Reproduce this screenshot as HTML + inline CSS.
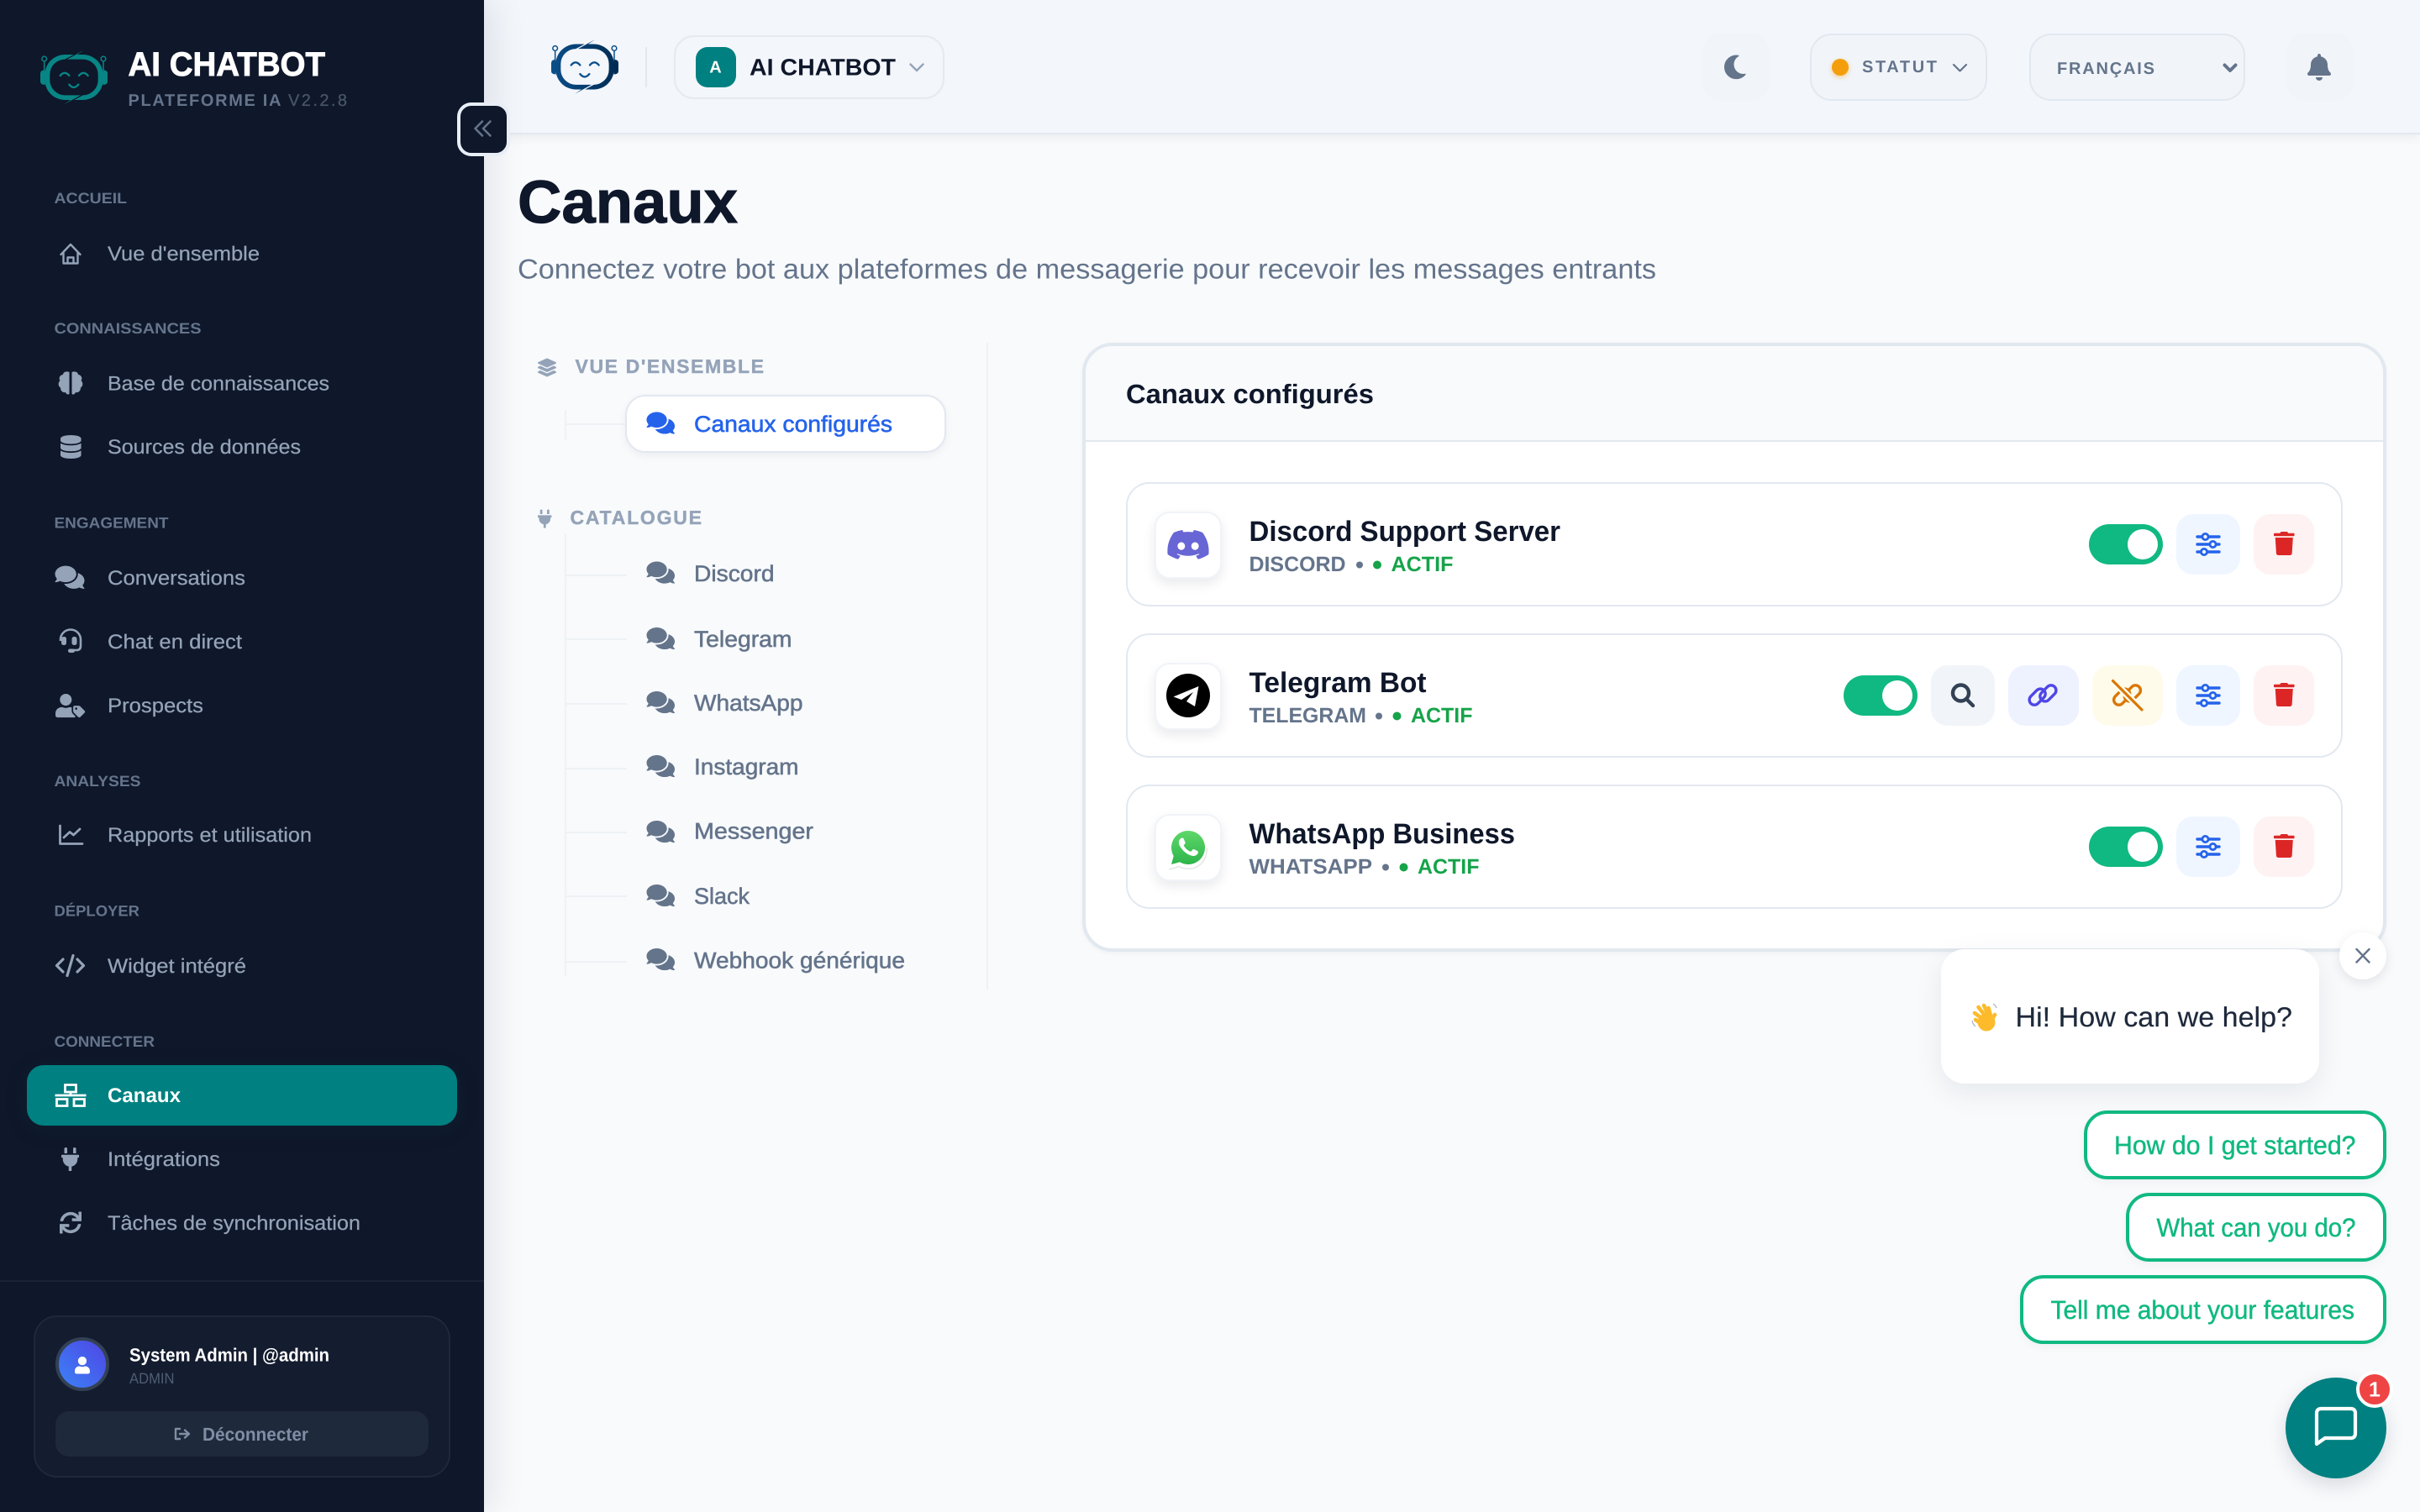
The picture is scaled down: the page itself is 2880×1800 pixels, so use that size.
<!DOCTYPE html>
<html lang="fr">
<head>
<meta charset="utf-8">
<title>Canaux</title>
<style>
html,body{margin:0;padding:0;width:2880px;height:1800px;overflow:hidden;background:#f8fafc}
.b{position:absolute;box-sizing:border-box}
svg.l{position:absolute;left:0;top:0;width:2880px;height:1800px;z-index:20;pointer-events:none}
svg text{font-family:"Liberation Sans",sans-serif;text-rendering:geometricPrecision;white-space:pre}
.sec{font-size:18px;font-weight:700;fill:#64748b}
.nav{font-size:24px;fill:#94a3b8;stroke:#94a3b8;stroke-width:.25}
.tree{font-size:27px;fill:#64748b;stroke:#64748b;stroke-width:.55}
.th{font-size:23px;font-weight:700;fill:#94a3b8}
.nm{font-size:34px;font-weight:700;fill:#0f172a}
.tp{font-size:25px;font-weight:700;fill:#64748b}
.ac{font-size:25px;font-weight:700;fill:#16a34a}
.sg{font-size:31px;fill:#10b981;stroke:#10b981;stroke-width:.45}
.row{left:1340px;width:1448px;height:148px;border:2px solid #e2e8f0;border-radius:28px;background:#fff}
.lg{left:1374px;width:80px;height:80px;border:2px solid #f0f3f8;border-radius:18px;background:#fff;box-shadow:0 6px 14px rgba(15,23,42,.09)}
.tg{width:88px;height:48px;border-radius:24px;background:#10b981}
.tg i{position:absolute;right:6px;top:6px;width:36px;height:36px;border-radius:50%;background:#fff}
.ib{height:72px;border-radius:20px}
.sq{left:2590px;width:76px;background:#eff6ff}
.dl{left:2682px;width:72px;background:#fef2f2}
.sb{border:4px solid #10b981;border-radius:28px;background:#fff;left:auto;right:40px;height:82px;z-index:10;box-shadow:0 4px 12px rgba(15,23,42,.04)}
</style>
</head>
<body>
<!-- top bar -->
<div class="b" style="left:576px;top:0;width:2304px;height:160px;background:#f3f6fb;border-bottom:2px solid #e2e8f0;box-shadow:0 4px 12px rgba(15,23,42,.06)"></div>
<div class="b" style="left:768px;top:56px;width:2px;height:48px;background:#e2e8f0"></div>
<div class="b" style="left:802px;top:42px;width:322px;height:76px;border:2px solid #e5eaf1;border-radius:24px"></div>
<div class="b" style="left:828px;top:56px;width:48px;height:48px;border-radius:14px;background:#008080"></div>
<div class="b" style="left:2026px;top:40px;width:80px;height:80px;border-radius:22px;background:#f1f5f9"></div>
<div class="b" style="left:2154px;top:40px;width:211px;height:80px;border:2px solid #e2e8f0;border-radius:26px;background:#f1f5f9"></div>
<div class="b" style="left:2415px;top:40px;width:257px;height:80px;border:2px solid #e2e8f0;border-radius:26px;background:#f1f5f9"></div>
<div class="b" style="left:2721px;top:40px;width:80px;height:80px;border-radius:22px;background:#f1f5f9"></div>
<div class="b" style="left:2180px;top:70px;width:20px;height:20px;border-radius:50%;background:#f59e0b;box-shadow:0 2px 6px rgba(245,158,11,.45)"></div>

<!-- sidebar -->
<div class="b" style="left:0;top:0;width:576px;height:1800px;background:#0f172a;box-shadow:8px 0 40px rgba(15,23,42,.1);z-index:5"></div>
<div class="b" style="left:32px;top:1268px;width:512px;height:72px;border-radius:20px;background:#008080;box-shadow:0 4px 32px rgba(0,128,128,.08);z-index:6"></div>
<div class="b" style="left:0;top:1524px;width:576px;height:2px;background:#1a2437;z-index:6"></div>
<div class="b" style="left:40px;top:1566px;width:496px;height:193px;border:2px solid #1e293b;border-radius:28px;background:#141c2f;z-index:6"></div>
<div class="b" style="left:66px;top:1592px;width:64px;height:64px;border:4px solid #334155;border-radius:50%;background:linear-gradient(45deg,#3b82f6,#4f46e5);z-index:6"></div>
<div class="b" style="left:66px;top:1680px;width:444px;height:54px;border-radius:16px;background:#1e293b;z-index:6"></div>
<div class="b" style="left:544px;top:122px;width:63px;height:64px;border:4px solid #e8eef6;border-radius:17px;background:#0f172a;z-index:7"></div>

<!-- section nav -->
<div class="b" style="left:1174px;top:408px;width:2px;height:770px;background:#eef2f6"></div>
<div class="b" style="left:672px;top:488px;width:2px;height:35px;background:#eef2f6"></div>
<div class="b" style="left:673px;top:504px;width:72px;height:2px;background:#eef2f6"></div>
<div class="b" style="left:744px;top:470px;width:382px;height:69px;border:2px solid #e2e8f0;border-radius:24px;background:#fff;box-shadow:0 4px 10px rgba(15,23,42,.05)"></div>
<div class="b" style="left:672px;top:636px;width:2px;height:526px;background:#eef2f6"></div>
<div class="b" style="left:673px;top:684px;width:73px;height:2px;background:#eef2f6"></div>
<div class="b" style="left:673px;top:760px;width:73px;height:2px;background:#eef2f6"></div>
<div class="b" style="left:673px;top:837px;width:73px;height:2px;background:#eef2f6"></div>
<div class="b" style="left:673px;top:914px;width:73px;height:2px;background:#eef2f6"></div>
<div class="b" style="left:673px;top:990px;width:73px;height:2px;background:#eef2f6"></div>
<div class="b" style="left:673px;top:1066px;width:73px;height:2px;background:#eef2f6"></div>
<div class="b" style="left:673px;top:1144px;width:73px;height:2px;background:#eef2f6"></div>

<!-- card -->
<div class="b" style="left:1288px;top:408px;width:1552px;height:725px;border:4px solid #e2e8f0;border-radius:36px;background:#fff;overflow:hidden;box-shadow:0 2px 6px rgba(15,23,42,.04)">
  <div class="b" style="left:0;top:0;width:100%;height:114px;background:#f8fafc;border-bottom:2px solid #e2e8f0"></div>
</div>
<div class="b row" style="top:574px"></div>
<div class="b row" style="top:754px"></div>
<div class="b row" style="top:934px"></div>
<div class="b lg" style="top:609px"></div>
<div class="b lg" style="top:789px"></div>
<div class="b lg" style="top:969px"></div>
<div class="b" style="left:1388px;top:802px;width:52px;height:52px;border-radius:50%;background:#000"></div>

<div class="b tg" style="left:2486px;top:624px"><i></i></div>
<div class="b ib sq" style="top:612px"></div>
<div class="b ib dl" style="top:612px"></div>
<div class="b tg" style="left:2194px;top:804px"><i></i></div>
<div class="b ib" style="left:2298px;top:792px;width:76px;background:#f1f5f9"></div>
<div class="b ib" style="left:2390px;top:792px;width:84px;background:#eef2ff"></div>
<div class="b ib" style="left:2490px;top:792px;width:84px;background:#fffbeb"></div>
<div class="b ib sq" style="top:792px"></div>
<div class="b ib dl" style="top:792px"></div>
<div class="b tg" style="left:2486px;top:984px"><i></i></div>
<div class="b ib sq" style="top:972px"></div>
<div class="b ib dl" style="top:972px"></div>

<!-- chat widget -->
<div class="b" style="left:2310px;top:1130px;width:450px;height:160px;border-radius:28px;background:#fff;box-shadow:0 10px 34px rgba(15,23,42,.08);z-index:10"></div>
<div class="b" style="left:2784px;top:1110px;width:56px;height:56px;border-radius:50%;background:#fff;box-shadow:0 4px 14px rgba(15,23,42,.1);z-index:10"></div>
<div class="b sb" style="top:1322px;width:360px"></div>
<div class="b sb" style="top:1420px;width:310px"></div>
<div class="b sb" style="top:1518px;width:436px"></div>
<div class="b" style="left:2720px;top:1640px;width:120px;height:120px;border-radius:50%;background:#008080;box-shadow:0 8px 24px rgba(15,23,42,.14);z-index:10"></div>
<div class="b" style="left:2804px;top:1632px;width:44px;height:44px;border:4px solid #fff;border-radius:50%;background:#ef4444;z-index:11"></div>

<svg class="l" viewBox="0 0 2880 1800" xmlns="http://www.w3.org/2000/svg">
<defs>
<linearGradient id="navy" gradientUnits="userSpaceOnUse" x1="84" y1="0" x2="324" y2="0"><stop offset="0" stop-color="#0b4f8a"/><stop offset="1" stop-color="#002b52"/></linearGradient>
<linearGradient id="wa" x1="0" y1="0" x2="0" y2="1"><stop offset="0" stop-color="#5fd76a"/><stop offset="1" stop-color="#2db54a"/></linearGradient>
<g id="logo">
<path d="M203 105L172 105A72 72 0 0 0 100 177L100 195A72 72 0 0 0 172 267L192 267L168 283L228 250L172 250A54 54 0 0 1 118 196L118 176A54 54 0 0 1 172 122Z"/>
<path d="M205 267L236 267A72 72 0 0 0 308 195L308 177A72 72 0 0 0 236 105L216 105L240 89L180 122L236 122A54 54 0 0 1 290 176L290 196A54 54 0 0 1 236 250Z"/>
<path d="M84 172Q84 160 101 160L101 213Q84 213 84 201Z"/><path d="M324 172Q324 160 307 160L307 213Q324 213 324 201Z"/>
<path d="M155 180Q171 161 187 180M222 180Q238 161 254 180M187 212Q203 232 220 212" fill="none" stroke-width="7" stroke="currentColor" stroke-linecap="round"/>
<path d="M98 129V162M309 129V162" fill="none" stroke-width="4.5" stroke="currentColor"/>
<circle cx="98" cy="120" r="8.5" fill="none" stroke-width="4.5" stroke="currentColor"/><circle cx="309" cy="120" r="8.5" fill="none" stroke-width="4.5" stroke="currentColor"/>
</g>
<path id="cm" d="M416 192c0-88.4-93.1-160-208-160S0 103.6 0 192c0 34.3 14.1 65.9 38 92-13.4 30.2-35.5 54.2-35.8 54.5-2.2 2.3-2.8 5.7-1.5 8.7S4.8 352 8 352c36.6 0 66.9-12.3 88.7-25 32.2 15.7 70.3 25 111.3 25 114.9 0 208-71.6 208-160zm122 220c23.9-26 38-57.7 38-92 0-66.9-53.5-124.2-129.3-148.1.9 6.6 1.3 13.3 1.3 20.1 0 105.9-107.7 192-240 192-10.8 0-21.3-.8-31.7-1.9C207.8 439.6 281.8 480 368 480c41 0 79.1-9.2 111.3-25 21.8 12.7 52.1 25 88.7 25 3.2 0 6.1-1.9 7.3-4.8 1.3-2.9.7-6.3-1.5-8.7-.3-.3-22.4-24.2-35.8-54.5z"/>
<path id="plug" d="M320,32a32,32,0,0,0-64,0v96h64Zm48,128H16A16,16,0,0,0,0,176v32a16,16,0,0,0,16,16H32v32A160.07,160.07,0,0,0,160,412.8V512h64V412.8A160.07,160.07,0,0,0,352,256V224h16a16,16,0,0,0,16-16V176A16,16,0,0,0,368,160ZM128,32a32,32,0,0,0-64,0v96h64Z"/>
<path id="trash" d="M432 32H312l-9.4-18.7A24 24 0 0 0 281.1 0H166.8a23.72 23.72 0 0 0-21.4 13.3L136 32H16A16 16 0 0 0 0 48v32a16 16 0 0 0 16 16h416a16 16 0 0 0 16-16V48a16 16 0 0 0-16-16zM53.2 467a48 48 0 0 0 47.9 45h245.8a48 48 0 0 0 47.9-45L416 128H32z"/>
<g id="sl" fill="none" stroke="#2563eb" stroke-width="3.4" stroke-linecap="round">
<path d="M-13 -9H13M-13 0H13M-13 9H13"/>
<circle cx="-3.5" cy="-9" r="3.6" fill="#eff6ff" stroke-width="2.8"/><circle cx="5.5" cy="0" r="3.6" fill="#eff6ff" stroke-width="2.8"/><circle cx="-5" cy="9" r="3.6" fill="#eff6ff" stroke-width="2.8"/>
</g>
</defs>

<!-- sidebar brand -->
<g transform="translate(48 60) scale(.3333)" fill="#088585" color="#088585"><use href="#logo" transform="translate(-84 -90)"/></g>
<text x="152.5" y="90" font-size="40" font-weight="700" fill="#fff" stroke="#fff" stroke-width=".9" textLength="234.5" lengthAdjust="spacingAndGlyphs">AI CHATBOT</text>
<text x="152.5" y="126" font-size="20" font-weight="700" fill="#64748b" textLength="182" lengthAdjust="spacing">PLATEFORME IA</text>
<text x="343" y="126" font-size="20" fill="#475569" stroke="#475569" stroke-width=".3" textLength="70" lengthAdjust="spacing">V2.2.8</text>
<path d="M574 144.5L565.5 153L574 161.5M583.5 144.5L575 153L583.5 161.5" fill="none" stroke="#64748b" stroke-width="2.6" stroke-linecap="round" stroke-linejoin="round"/>

<!-- sidebar labels -->
<g>
<text class="sec" x="64.5" y="242" textLength="86.5" lengthAdjust="spacingAndGlyphs">ACCUEIL</text>
<text class="sec" x="64.5" y="397" textLength="175" lengthAdjust="spacingAndGlyphs">CONNAISSANCES</text>
<text class="sec" x="64.5" y="628.5" textLength="136" lengthAdjust="spacingAndGlyphs">ENGAGEMENT</text>
<text class="sec" x="64.5" y="936" textLength="103" lengthAdjust="spacingAndGlyphs">ANALYSES</text>
<text class="sec" x="64.5" y="1090.5" textLength="101.5" lengthAdjust="spacingAndGlyphs">DÉPLOYER</text>
<text class="sec" x="64.5" y="1246" textLength="119.5" lengthAdjust="spacingAndGlyphs">CONNECTER</text>

<text class="nav" x="128" y="310" textLength="181" lengthAdjust="spacingAndGlyphs">Vue d'ensemble</text>
<text class="nav" x="128" y="464.5" textLength="264" lengthAdjust="spacingAndGlyphs">Base de connaissances</text>
<text class="nav" x="128" y="540" textLength="230" lengthAdjust="spacingAndGlyphs">Sources de données</text>
<text class="nav" x="128" y="696" textLength="164" lengthAdjust="spacingAndGlyphs">Conversations</text>
<text class="nav" x="128" y="772" textLength="160" lengthAdjust="spacingAndGlyphs">Chat en direct</text>
<text class="nav" x="128" y="848" textLength="114" lengthAdjust="spacingAndGlyphs">Prospects</text>
<text class="nav" x="128" y="1002" textLength="243" lengthAdjust="spacingAndGlyphs">Rapports et utilisation</text>
<text class="nav" x="128" y="1158" textLength="165" lengthAdjust="spacingAndGlyphs">Widget intégré</text>
<text x="128" y="1312" font-size="24" font-weight="700" fill="#fff" textLength="87" lengthAdjust="spacingAndGlyphs">Canaux</text>
<text class="nav" x="128" y="1388" textLength="134" lengthAdjust="spacingAndGlyphs">Intégrations</text>
<text class="nav" x="128" y="1464" textLength="301" lengthAdjust="spacingAndGlyphs">Tâches de synchronisation</text>
<text x="154" y="1620.5" font-size="22" font-weight="700" fill="#fff" textLength="238" lengthAdjust="spacingAndGlyphs">System Admin | @admin</text>
<text x="154" y="1647" font-size="18" fill="#4f5d73" textLength="53.5" lengthAdjust="spacingAndGlyphs">ADMIN</text>
<text x="241" y="1715" font-size="22" font-weight="700" fill="#7f8ea4" textLength="126" lengthAdjust="spacingAndGlyphs">Déconnecter</text>
</g>

<!-- sidebar icons -->
<g fill="#94a3b8">
<path d="M72.5 303L84 291L95.5 303M75.5 300V313.5H92.5V300M80.5 313.5V306.5H87.5V313.5" fill="none" stroke="#94a3b8" stroke-width="2.4" stroke-linejoin="round" stroke-linecap="round"/>
<path d="M82.5 443C79 441.5 75 443 75 446C71 446 69.5 451 71.5 453C68.5 456 69.5 460 72 461.5C72 465.5 75 468 78 467C79 470 82.5 470.5 82.5 468Z"/>
<path d="M85.5 443C89 441.5 93 443 93 446C97 446 98.5 451 96.5 453C99.5 456 98.5 460 96 461.5C96 465.5 93 468 90 467C89 470 85.5 470.5 85.5 468Z"/>
<path transform="translate(72 518) scale(.0548)" d="M448 73.143v45.714C448 159.143 347.667 192 224 192S0 159.143 0 118.857V73.143C0 32.857 100.333 0 224 0s224 32.857 224 73.143zM448 176v102.857C448 319.143 347.667 352 224 352S0 319.143 0 278.857V176c48.125 33.143 136.208 48.572 224 48.572S399.874 209.143 448 176zm0 160v102.857C448 479.143 347.667 512 224 512S0 479.143 0 438.857V336c48.125 33.143 136.208 48.572 224 48.572S399.874 369.143 448 336z"/>
<use href="#cm" transform="translate(65.5 671.7) scale(.0608)"/>
<path d="M72 763V761.5A12 12 0 0 1 96 761.5V769Q96 774 91 774H84" fill="none" stroke="#94a3b8" stroke-width="2.6"/>
<rect x="73" y="758" width="6" height="10" rx="2.5"/><rect x="81" y="772.5" width="8" height="4.5" rx="2.2"/><rect x="85.5" y="758" width="6" height="10" rx="2.5"/>
<path transform="translate(66 826) scale(.055)" d="M630.6 364.9l-90.3-90.2c-12-12-28.3-18.7-45.3-18.7h-79.3c-17.7 0-32 14.3-32 32v79.2c0 17 6.7 33.2 18.7 45.2l90.3 90.2c12.5 12.5 32.8 12.5 45.3 0l92.5-92.5c12.6-12.5 12.6-32.7.1-45.2zm-182.8-21c-13.3 0-24-10.7-24-24s10.7-24 24-24 24 10.7 24 24c0 13.2-10.7 24-24 24zm-223.8-88c70.7 0 128-57.3 128-128C352 57.3 294.7 0 224 0S96 57.3 96 128c0 70.6 57.3 128 128 128zm127.8 111.2V294c-12.2-3.6-24.9-6.2-38.2-6.2h-16.7c-22.2 10.2-46.9 16-72.9 16s-50.6-5.8-72.9-16h-16.7C60.2 287.9 0 348.1 0 422.3v41.6c0 26.5 21.5 48 48 48h352c15.5 0 29.1-7.5 37.9-18.9l-58-58c-18.1-18.1-28.1-42.2-28.1-67.9z"/>
<path d="M71.5 983V1004.5H98M76 997L83 990.5L87.5 994L95 987" fill="none" stroke="#94a3b8" stroke-width="2.8" stroke-linecap="round" stroke-linejoin="round"/>
<path d="M75 1142L67.5 1149.5L75 1157M92 1142L99.5 1149.5L92 1157M87 1137.5L80 1161.5" fill="none" stroke="#94a3b8" stroke-width="3.2" stroke-linecap="round" stroke-linejoin="round"/>
<use href="#plug" transform="translate(73 1366) scale(.0548)"/>
<path transform="translate(71 1442.5) scale(.0508)" d="M440.65 12.57l4 82.77A247.16 247.16 0 0 0 255.83 8C134.73 8 33.91 94.92 12.29 209.82A12 12 0 0 0 24.09 224h49.05a12 12 0 0 0 11.67-9.26 175.91 175.91 0 0 1 317-56.94l-101.46-4.86a12 12 0 0 0-12.57 12v47.41a12 12 0 0 0 12 12H500a12 12 0 0 0 12-12V12a12 12 0 0 0-12-12h-47.37a12 12 0 0 0-11.98 12.57zM255.83 432a175.61 175.61 0 0 1-146-77.8l101.8 4.87a12 12 0 0 0 12.57-12v-47.4a12 12 0 0 0-12-12H12a12 12 0 0 0-12 12V500a12 12 0 0 0 12 12h47.35a12 12 0 0 0 12-12.6l-4.15-82.57A247.17 247.17 0 0 0 255.83 504c121.11 0 221.93-86.92 243.55-201.82a12 12 0 0 0-11.8-14.18h-49.05a12 12 0 0 0-11.67 9.26A175.86 175.86 0 0 1 255.83 432z"/>
<path d="M77.5 1291.5H90.5V1300H77.5ZM67.5 1308.5H80V1316.5H67.5ZM88 1308.5H100.5V1316.5H88ZM65.5 1304H102.5M84 1300V1304" fill="none" stroke="#fff" stroke-width="2.8"/>
<path d="M209 1701H214M209 1701V1713H214M214 1707H225M220 1702.5L225 1707L220 1711.5" fill="none" stroke="#7f8ea4" stroke-width="2.4" stroke-linecap="round" stroke-linejoin="round"/>
<path transform="translate(89 1615) scale(.04)" fill="#fff" d="M224 256c70.7 0 128-57.3 128-128S294.7 0 224 0 96 57.3 96 128s57.3 128 128 128zm89.6 32h-16.7c-22.2 10.2-46.9 16-72.9 16s-50.6-5.8-72.9-16h-16.7C60.2 288 0 348.2 0 422.4V464c0 26.5 21.5 48 48 48h352c26.5 0 48-21.5 48-48v-41.6c0-74.2-60.2-134.4-134.4-134.4z"/>
</g>

<!-- top bar content -->
<g transform="translate(628 17.5) scale(.3333)" fill="url(#navy)" color="#0b4f8a"><use href="#logo"/></g>
<text x="851.5" y="86.5" text-anchor="middle" font-size="20" font-weight="700" fill="#fff">A</text>
<text x="892" y="89.5" font-size="28" font-weight="700" fill="#0f172a" textLength="174" lengthAdjust="spacingAndGlyphs">AI CHATBOT</text>
<path d="M1083.5 76.5L1091 84L1098.5 76.5" fill="none" stroke="#94a3b8" stroke-width="2.4" stroke-linecap="round" stroke-linejoin="round"/>
<path transform="translate(2050.5 65.5) scale(.056)" fill="#64748b" d="M283.211 512c78.962 0 151.079-35.925 198.857-94.792 7.068-8.708-.639-21.43-11.562-19.35-124.203 23.654-238.262-71.576-238.262-196.954 0-72.222 38.662-138.635 101.498-174.394 9.686-5.512 7.25-20.197-3.756-22.23A258.156 258.156 0 0 0 283.211 0c-141.309 0-256 114.511-256 256 0 141.309 114.511 256 256 256z"/>
<text x="2216" y="86" font-size="20" font-weight="700" fill="#64748b" textLength="89" lengthAdjust="spacing">STATUT</text>
<path d="M2325 77L2332.5 84.5L2340 77" fill="none" stroke="#64748b" stroke-width="2.2" stroke-linecap="round" stroke-linejoin="round"/>
<text x="2448" y="88" font-size="20" font-weight="700" fill="#64748b" textLength="116" lengthAdjust="spacing">FRANÇAIS</text>
<path d="M2647.5 77.5L2654 84L2660.5 77.5" fill="none" stroke="#64748b" stroke-width="4" stroke-linecap="round" stroke-linejoin="round"/>
<path transform="translate(2746 64) scale(.0625)" fill="#64748b" d="M224 512c35.32 0 63.97-28.65 63.97-64H160.03c0 35.35 28.65 64 63.97 64zm215.39-149.71c-19.32-20.76-55.47-51.99-55.47-154.29 0-77.7-54.48-139.9-127.94-155.16V32c0-17.67-14.32-32-31.98-32s-31.98 14.33-31.98 32v20.84C118.56 68.1 64.08 130.3 64.08 208c0 102.3-36.15 133.53-55.47 154.29-6 6.45-8.66 14.16-8.61 21.71.11 16.4 12.98 32 32.1 32h383.8c19.12 0 32-15.6 32.1-32 .05-7.55-2.61-15.27-8.61-21.71z"/>

<!-- heading -->
<text x="616" y="265" font-size="72" font-weight="700" fill="#0f172a" stroke="#0f172a" stroke-width="1" textLength="262" lengthAdjust="spacingAndGlyphs">Canaux</text>
<text x="616" y="331.5" font-size="33" fill="#64748b" textLength="1355" lengthAdjust="spacingAndGlyphs">Connectez votre bot aux plateformes de messagerie pour recevoir les messages entrants</text>

<!-- tree -->
<path transform="translate(640 426.5) scale(.043)" fill="#94a3b8" d="M12.41 148.02l232.94 105.67c6.8 3.09 14.49 3.09 21.29 0l232.94-105.67c16.55-7.51 16.55-32.52 0-40.03L266.65 2.31a25.607 25.607 0 0 0-21.29 0L12.41 107.98c-16.55 7.51-16.55 32.53 0 40.04zm487.18 88.28l-58.09-26.33-161.64 73.27c-7.56 3.43-15.59 5.17-23.86 5.17s-16.29-1.74-23.86-5.17L70.51 209.97l-58.1 26.33c-16.55 7.5-16.55 32.5 0 40l232.94 105.59c6.8 3.08 14.49 3.08 21.29 0L499.59 276.3c16.55-7.5 16.55-32.5 0-40zm0 127.8l-57.87-26.23-161.86 73.37c-7.56 3.43-15.59 5.17-23.86 5.17s-16.29-1.74-23.86-5.17L70.29 337.87 12.41 364.1c-16.55 7.5-16.55 32.5 0 40l232.94 105.59c6.8 3.08 14.49 3.08 21.29 0L499.59 404.1c16.55-7.5 16.55-32.5 0-40z"/>
<text class="th" x="684.5" y="444" stroke="#94a3b8" stroke-width=".4" textLength="224.5" lengthAdjust="spacing">VUE D'ENSEMBLE</text>
<use href="#plug" fill="#94a3b8" transform="translate(640 606.5) scale(.043)"/>
<text class="th" x="678.5" y="624" stroke="#94a3b8" stroke-width=".4" textLength="156.5" lengthAdjust="spacing">CATALOGUE</text>
<use href="#cm" fill="#2563eb" transform="translate(769.5 488.6) scale(.0582)"/>
<text x="826" y="514" font-size="27" fill="#2563eb" stroke="#2563eb" stroke-width=".6" textLength="236" lengthAdjust="spacingAndGlyphs">Canaux configurés</text>
<g fill="#64748b">
<use href="#cm" transform="translate(769.5 666.7) scale(.0582)"/>
<use href="#cm" transform="translate(769.5 745.1) scale(.0582)"/>
<use href="#cm" transform="translate(769.5 821.1) scale(.0582)"/>
<use href="#cm" transform="translate(769.5 897.1) scale(.0582)"/>
<use href="#cm" transform="translate(769.5 975.1) scale(.0582)"/>
<use href="#cm" transform="translate(769.5 1051.1) scale(.0582)"/>
<use href="#cm" transform="translate(769.5 1127.1) scale(.0582)"/>
</g>
<text class="tree" x="826" y="692" textLength="95.5" lengthAdjust="spacingAndGlyphs">Discord</text>
<text class="tree" x="826" y="770" textLength="116.5" lengthAdjust="spacingAndGlyphs">Telegram</text>
<text class="tree" x="826" y="846" textLength="129.5" lengthAdjust="spacingAndGlyphs">WhatsApp</text>
<text class="tree" x="826" y="922" textLength="124.5" lengthAdjust="spacingAndGlyphs">Instagram</text>
<text class="tree" x="826" y="998.5" textLength="142" lengthAdjust="spacingAndGlyphs">Messenger</text>
<text class="tree" x="826" y="1076" textLength="66" lengthAdjust="spacingAndGlyphs">Slack</text>
<text class="tree" x="826" y="1152.5" textLength="251" lengthAdjust="spacingAndGlyphs">Webhook générique</text>

<!-- card content -->
<text x="1340" y="480" font-size="32" font-weight="700" fill="#0f172a" textLength="295" lengthAdjust="spacingAndGlyphs">Canaux configurés</text>

<text class="nm" x="1486.5" y="644" textLength="370.5" lengthAdjust="spacingAndGlyphs">Discord Support Server</text>
<text class="tp" x="1486.5" y="680" textLength="115" lengthAdjust="spacingAndGlyphs">DISCORD</text>
<circle cx="1618" cy="672.5" r="4" fill="#64748b"/><circle cx="1639" cy="672.5" r="5" fill="#16a34a"/>
<text class="ac" x="1655.5" y="680" textLength="74" lengthAdjust="spacingAndGlyphs">ACTIF</text>

<text class="nm" x="1486.5" y="824" textLength="211" lengthAdjust="spacingAndGlyphs">Telegram Bot</text>
<text class="tp" x="1486.5" y="860" textLength="139.5" lengthAdjust="spacingAndGlyphs">TELEGRAM</text>
<circle cx="1641" cy="852.5" r="4" fill="#64748b"/><circle cx="1662.5" cy="852.5" r="5" fill="#16a34a"/>
<text class="ac" x="1679" y="860" textLength="73.5" lengthAdjust="spacingAndGlyphs">ACTIF</text>

<text class="nm" x="1486.5" y="1004" textLength="316.5" lengthAdjust="spacingAndGlyphs">WhatsApp Business</text>
<text class="tp" x="1486.5" y="1040" textLength="146.5" lengthAdjust="spacingAndGlyphs">WHATSAPP</text>
<circle cx="1649" cy="1032.5" r="4" fill="#64748b"/><circle cx="1670.5" cy="1032.5" r="5" fill="#16a34a"/>
<text class="ac" x="1687" y="1040" textLength="73.5" lengthAdjust="spacingAndGlyphs">ACTIF</text>

<!-- brand icons -->
<path transform="translate(1389.4 625.6) scale(2.05 1.9)" fill="#6865d5" d="M20.317 4.3698a19.7913 19.7913 0 00-4.8851-1.5152.0741.0741 0 00-.0785.0371c-.211.3753-.4447.8648-.6083 1.2495-1.8447-.2762-3.68-.2762-5.4868 0-.1636-.3933-.4058-.8742-.6177-1.2495a.077.077 0 00-.0785-.037 19.7363 19.7363 0 00-4.8852 1.515.0699.0699 0 00-.0321.0277C.5334 9.0458-.319 13.5799.0992 18.0578a.0824.0824 0 00.0312.0561c2.0528 1.5076 4.0413 2.4228 5.9929 3.0294a.0777.0777 0 00.0842-.0276c.4616-.6304.8731-1.2952 1.226-1.9942a.076.076 0 00-.0416-.1057c-.6528-.2476-1.2743-.5495-1.8722-.8923a.077.077 0 01-.0076-.1277c.1258-.0943.2517-.1923.3718-.2914a.0743.0743 0 01.0776-.0105c3.9278 1.7933 8.18 1.7933 12.0614 0a.0739.0739 0 01.0785.0095c.1202.099.246.1981.3728.2924a.077.077 0 01-.0066.1276 12.2986 12.2986 0 01-1.873.8914.0766.0766 0 00-.0407.1067c.3604.698.7719 1.3628 1.225 1.9932a.076.076 0 00.0842.0286c1.961-.6067 3.9495-1.5219 6.0023-3.0294a.077.077 0 00.0313-.0552c.5004-5.177-.8382-9.6739-3.5485-13.6604a.061.061 0 00-.0312-.0286zM8.02 15.3312c-1.1825 0-2.1569-1.0857-2.1569-2.419 0-1.3332.9555-2.4189 2.157-2.4189 1.2108 0 2.1757 1.0952 2.1568 2.419 0 1.3332-.9555 2.4189-2.1569 2.4189zm7.9748 0c-1.1825 0-2.1569-1.0857-2.1569-2.419 0-1.3332.9554-2.4189 2.1569-2.4189 1.2108 0 2.1757 1.0952 2.1568 2.419 0 1.3332-.946 2.4189-2.1568 2.4189Z"/>
<path fill="#fff" d="M1396.5 829.5L1426.5 817L1422 841L1412 835L1420 824L1406 833Z"/>
<path d="M1391.5 1035Q1398 1033.5 1403 1031.5Q1412 1036 1422 1033Q1436 1027 1436.5 1010" fill="none" stroke="#dfe5e2" stroke-width="1.4"/>
<path fill="url(#wa)" d="M1414 989A20 20 0 1 1 1404 1026.3L1394 1029L1396.7 1019A20 20 0 0 1 1414 989Z"/>
<path transform="translate(1391.5 985.5) scale(1.9)" fill="#fff" d="M17.472 14.382c-.297-.149-1.758-.867-2.03-.967-.273-.099-.471-.148-.67.15-.197.297-.767.966-.94 1.164-.173.199-.347.223-.644.075-.297-.15-1.255-.463-2.39-1.475-.883-.788-1.48-1.761-1.653-2.059-.173-.297-.018-.458.13-.606.134-.133.298-.347.446-.52.149-.174.198-.298.298-.497.099-.198.05-.371-.025-.52-.075-.149-.669-1.612-.916-2.207-.242-.579-.487-.5-.669-.51-.173-.008-.371-.01-.57-.01-.198 0-.52.074-.792.372-.272.297-1.04 1.016-1.04 2.479 0 1.462 1.065 2.875 1.213 3.074.149.198 2.096 3.2 5.077 4.487.709.306 1.262.489 1.694.625.712.227 1.36.195 1.871.118.571-.085 1.758-.719 2.006-1.413.248-.694.248-1.289.173-1.413-.074-.124-.272-.198-.57-.347"/>

<!-- action icons -->
<use href="#sl" transform="translate(2628 648)"/>
<use href="#sl" transform="translate(2628 828)"/>
<use href="#sl" transform="translate(2628 1008)"/>
<use href="#trash" fill="#dc2626" transform="translate(2706 633) scale(.0548)"/>
<use href="#trash" fill="#dc2626" transform="translate(2706 813) scale(.0548)"/>
<use href="#trash" fill="#dc2626" transform="translate(2706 993) scale(.0548)"/>
<circle cx="2333.5" cy="825" r="9.5" fill="none" stroke="#334155" stroke-width="4.4"/>
<path d="M2340.5 832.5L2348 840" stroke="#334155" stroke-width="4.4" stroke-linecap="round"/>
<g fill="none" stroke="#4f46e5" stroke-width="3.4" transform="translate(2431 827.5) rotate(-45)">
<rect x="-17" y="-9" width="22" height="12" rx="6"/><rect x="-5" y="-3" width="22" height="12" rx="6"/>
</g>
<g fill="none" stroke="#d97706" stroke-width="3.4" transform="translate(2531.5 827.5) rotate(-45)">
<rect x="-17" y="-9" width="22" height="12" rx="6"/><rect x="-5" y="-3" width="22" height="12" rx="6"/>
</g>
<path d="M2514.5 810.5L2549 845" stroke="#fffbeb" stroke-width="8"/>
<path d="M2514.5 810.5L2549 845" stroke="#d97706" stroke-width="3.2" stroke-linecap="round"/>

<!-- chat -->
<g>
<g stroke="#fdbb2c" stroke-width="4.6" stroke-linecap="round" fill="none">
<path d="M2361 1214L2350 1206M2363 1210L2354.5 1199M2366 1208L2361 1197M2369 1209L2366.5 1200"/>
<path d="M2358 1219L2351 1214"/>
<path d="M2369 1216L2374 1208"/>
</g>
<circle cx="2364" cy="1217" r="10.5" fill="#fdbb2c"/>
<path d="M2347 1215Q2348 1220 2351 1222M2372 1195Q2375 1197 2376 1200" fill="none" stroke="#a7b3c4" stroke-width="1.2"/>
<text x="2398.5" y="1222" font-size="33" fill="#1e293b" stroke="#1e293b" stroke-width=".2" textLength="329.5" lengthAdjust="spacingAndGlyphs">Hi! How can we help?</text>
<path d="M2804.5 1130L2819.5 1145.5M2819.5 1130L2804.5 1145.5" stroke="#64748b" stroke-width="2.4" stroke-linecap="round"/>
<text class="sg" x="2516" y="1374" textLength="287.5" lengthAdjust="spacingAndGlyphs">How do I get started?</text>
<text class="sg" x="2566.5" y="1472" textLength="237" lengthAdjust="spacingAndGlyphs">What can you do?</text>
<text class="sg" x="2440.5" y="1570" textLength="361.5" lengthAdjust="spacingAndGlyphs">Tell me about your features</text>
<path d="M2757 1719V1682.5Q2757 1677 2762.5 1677H2797.5Q2803 1677 2803 1682.5V1706.5Q2803 1712 2797.5 1712H2767Z" fill="none" stroke="#fff" stroke-width="4.2" stroke-linejoin="round"/>
<text x="2826" y="1662.5" text-anchor="middle" font-size="25" font-weight="700" fill="#fff">1</text>
</g>
</svg>
</body>
</html>
